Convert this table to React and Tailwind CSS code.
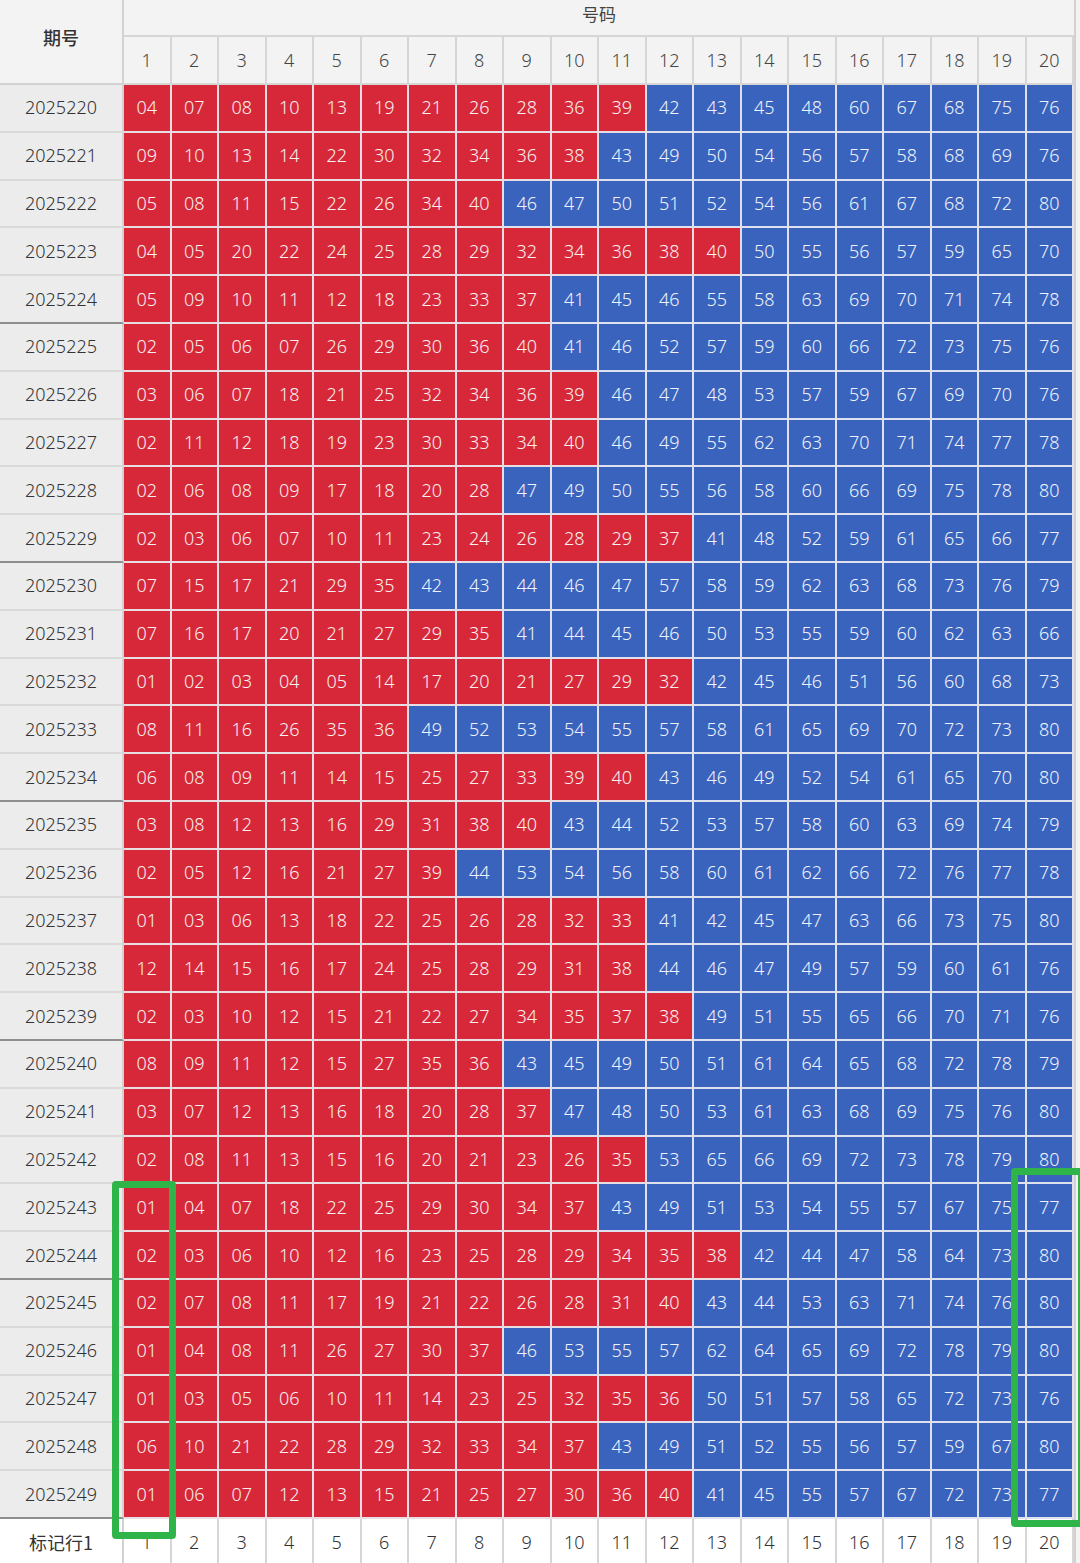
import React from "react";

const DATA = [
  ["2025220", "04 07 08 10 13 19 21 26 28 36 39 42 43 45 48 60 67 68 75 76"],
  ["2025221", "09 10 13 14 22 30 32 34 36 38 43 49 50 54 56 57 58 68 69 76"],
  ["2025222", "05 08 11 15 22 26 34 40 46 47 50 51 52 54 56 61 67 68 72 80"],
  ["2025223", "04 05 20 22 24 25 28 29 32 34 36 38 40 50 55 56 57 59 65 70"],
  ["2025224", "05 09 10 11 12 18 23 33 37 41 45 46 55 58 63 69 70 71 74 78"],
  ["2025225", "02 05 06 07 26 29 30 36 40 41 46 52 57 59 60 66 72 73 75 76"],
  ["2025226", "03 06 07 18 21 25 32 34 36 39 46 47 48 53 57 59 67 69 70 76"],
  ["2025227", "02 11 12 18 19 23 30 33 34 40 46 49 55 62 63 70 71 74 77 78"],
  ["2025228", "02 06 08 09 17 18 20 28 47 49 50 55 56 58 60 66 69 75 78 80"],
  ["2025229", "02 03 06 07 10 11 23 24 26 28 29 37 41 48 52 59 61 65 66 77"],
  ["2025230", "07 15 17 21 29 35 42 43 44 46 47 57 58 59 62 63 68 73 76 79"],
  ["2025231", "07 16 17 20 21 27 29 35 41 44 45 46 50 53 55 59 60 62 63 66"],
  ["2025232", "01 02 03 04 05 14 17 20 21 27 29 32 42 45 46 51 56 60 68 73"],
  ["2025233", "08 11 16 26 35 36 49 52 53 54 55 57 58 61 65 69 70 72 73 80"],
  ["2025234", "06 08 09 11 14 15 25 27 33 39 40 43 46 49 52 54 61 65 70 80"],
  ["2025235", "03 08 12 13 16 29 31 38 40 43 44 52 53 57 58 60 63 69 74 79"],
  ["2025236", "02 05 12 16 21 27 39 44 53 54 56 58 60 61 62 66 72 76 77 78"],
  ["2025237", "01 03 06 13 18 22 25 26 28 32 33 41 42 45 47 63 66 73 75 80"],
  ["2025238", "12 14 15 16 17 24 25 28 29 31 38 44 46 47 49 57 59 60 61 76"],
  ["2025239", "02 03 10 12 15 21 22 27 34 35 37 38 49 51 55 65 66 70 71 76"],
  ["2025240", "08 09 11 12 15 27 35 36 43 45 49 50 51 61 64 65 68 72 78 79"],
  ["2025241", "03 07 12 13 16 18 20 28 37 47 48 50 53 61 63 68 69 75 76 80"],
  ["2025242", "02 08 11 13 15 16 20 21 23 26 35 53 65 66 69 72 73 78 79 80"],
  ["2025243", "01 04 07 18 22 25 29 30 34 37 43 49 51 53 54 55 57 67 75 77"],
  ["2025244", "02 03 06 10 12 16 23 25 28 29 34 35 38 42 44 47 58 64 73 80"],
  ["2025245", "02 07 08 11 17 19 21 22 26 28 31 40 43 44 53 63 71 74 76 80"],
  ["2025246", "01 04 08 11 26 27 30 37 46 53 55 57 62 64 65 69 72 78 79 80"],
  ["2025247", "01 03 05 06 10 11 14 23 25 32 35 36 50 51 57 58 65 72 73 76"],
  ["2025248", "06 10 21 22 28 29 32 33 34 37 43 49 51 52 55 56 57 59 67 80"],
  ["2025249", "01 06 07 12 13 15 21 25 27 30 36 40 41 45 55 57 67 72 73 77"],
];

const COLS = Array.from({ length: 20 }, (_, i) => i + 1);

export default function App() {
  return (
    <div
      className="relative w-[1080px] h-[1563px] overflow-hidden bg-[#f3f3f3]"
      style={{ fontFamily: '"Noto Sans", "Noto Sans CJK SC", sans-serif' }}
    >
      <div className="grid w-[1076px] grid-cols-[124px_repeat(20,47.5px)] grid-rows-[37px_48px_repeat(30,47.8px)_48px] border-r-2 border-[#d2d2d2] text-[18px] font-light">
        {/* header */}
        <div className="row-span-2 flex items-center justify-center pb-2 border-r-2 border-b-2 border-[#d2d2d2] bg-[#f3f3f3] text-[#333] font-medium" style={{ fontFamily: '"Noto Sans CJK SC", sans-serif' }}>
          期号
        </div>
        <div className="col-span-20 flex items-center justify-center pb-2 border-b-2 border-[#d6d6d6] bg-[#f3f3f3] text-[#444] text-[17px] font-normal" style={{ fontFamily: '"Noto Sans CJK SC", sans-serif' }}>
          号码
        </div>
        {COLS.map((c) => (
          <div
            key={"h" + c}
            className="flex items-center justify-center border-r-2 border-b-2 border-[#d6d6d6] bg-[#f3f3f3] text-[#444]"
          >
            {c}
          </div>
        ))}

        {/* rows */}
        {DATA.map(([issue, nums], i) => {
          const sep = (i + 1) % 5 === 0;
          return (
            <React.Fragment key={issue}>
              <div
                className={
                  sep
                    ? "flex items-center justify-center bg-[#ececec] text-[#333] border-r-2 border-r-[#d2d2d2] border-b-2 border-b-[#8e8e8e]"
                    : "flex items-center justify-center bg-[#ececec] text-[#333] border-r-2 border-r-[#d2d2d2] border-b-2 border-b-[#dadada]"
                }
              >
                {issue}
              </div>
              {nums.split(" ").map((n, j) => (
                <div
                  key={j}
                  className={
                    Number(n) <= 40
                      ? "flex items-center justify-center bg-[#d72839] text-[#f7f0f0] border-r-2 border-b-2 border-[#e8dde3]"
                      : "flex items-center justify-center bg-[#3a63bd] text-[#f0f3fa] border-r-2 border-b-2 border-[#dfe2ee]"
                  }
                >
                  {n}
                </div>
              ))}
            </React.Fragment>
          );
        })}

        {/* footer */}
        <div className="flex items-center justify-center bg-white text-[#333] border-r-2 border-[#d2d2d2] font-normal" style={{ fontFamily: '"Noto Sans CJK SC", sans-serif' }}>
          标记行1
        </div>
        {COLS.map((c) => (
          <div
            key={"f" + c}
            className="flex items-center justify-center bg-white text-[#333] border-r-2 border-[#d6d6d6]"
          >
            {c}
          </div>
        ))}
      </div>

      {/* green marks */}
      <div className="absolute left-[112px] top-[1181px] w-[64px] h-[358px] border-[7px] border-[#2fb44a] rounded-[4px]" />
      <div className="absolute left-[1011px] top-[1168px] w-[74px] h-[359px] border-[7px] border-[#2fb44a] rounded-[4px]" />
    </div>
  );
}
